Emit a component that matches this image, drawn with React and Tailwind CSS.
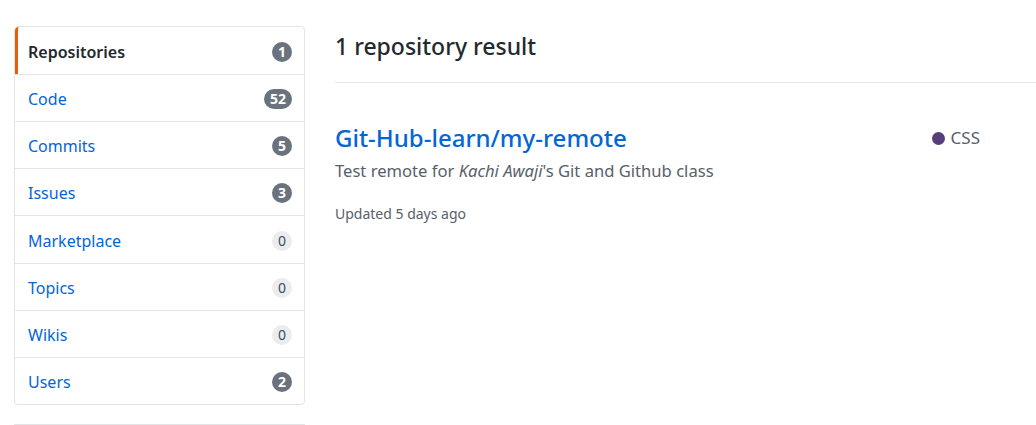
import React from "react";

const items = [
  { label: "Repositories", count: "1", active: true, dark: true },
  { label: "Code", count: "52", dark: true },
  { label: "Commits", count: "5", dark: true },
  { label: "Issues", count: "3", dark: true },
  { label: "Marketplace", count: "0", tall: true },
  { label: "Topics", count: "0" },
  { label: "Wikis", count: "0" },
  { label: "Users", count: "2", dark: true },
];

export default function App() {
  return (
    <div
      className="w-[1036px] h-[425px] overflow-hidden bg-white flex pl-[14px] pt-[26px]"
      style={{ fontFamily: '"Noto Sans", "Open Sans", sans-serif' }}
    >
      <div className="w-[291px] shrink-0 flex flex-col gap-[19px]">
        <nav className="border border-[#e1e4e8] rounded-[4px] bg-white">
          {items.map((it, i) => (
            <div
              key={it.label}
              className={`${it.tall ? "h-[48px]" : "h-[47px]"} flex items-center justify-between pr-[12px] pt-[2px] ${
                i > 0 ? "border-t border-[#e1e4e8]" : ""
              } ${it.active ? "border-l-[3px] border-l-[#e36209] pl-[10px] rounded-tl-[4px]" : "pl-[13px]"}`}
            >
              <span
                className={
                  it.active
                    ? "text-[16px] font-semibold text-[#24292e]"
                    : "text-[16px] text-[#0366d6]"
                }
              >
                {it.label}
              </span>
              <span
                className={`h-[20px] min-w-[20px] px-[6px] rounded-full flex items-center justify-center text-[14px] leading-none ${
                  it.dark ? "bg-[#6a737d] text-white font-bold" : "bg-[#eaecef] text-[#444d56] font-normal"
                }`}
              >
                {it.count}
              </span>
            </div>
          ))}
        </nav>
        <div className="h-[20px] border-t border-x border-[#e1e4e8] rounded-t-[4px]" />
      </div>

      <main className="flex-1 ml-[30px]">
        <div className="h-[57px] border-b border-[#e1e4e8] flex items-start">
          <h3 className="text-[23px] font-medium text-[#24292e] leading-[40px]">
            1 repository result
          </h3>
        </div>
        <div className="flex justify-between pt-[39px] pr-[56px]">
          <div>
            <a className="block text-[24px] font-medium text-[#0366d6] leading-[32px]">
              Git-Hub-learn/my-remote
            </a>
            <p className="text-[16.6px] text-[#586069] leading-[26px] mt-[4px]">
              Test remote for <em>Kachi Awaji</em>'s Git and Github class
            </p>
            <p className="text-[14px] text-[#586069] mt-[19px]">Updated 5 days ago</p>
          </div>
          <div className="flex items-center gap-[6px] h-[32px] text-[17px] text-[#586069]">
            <span className="w-[13px] h-[13px] rounded-full bg-[#563d7c]" />
            CSS
          </div>
        </div>
      </main>
    </div>
  );
}
